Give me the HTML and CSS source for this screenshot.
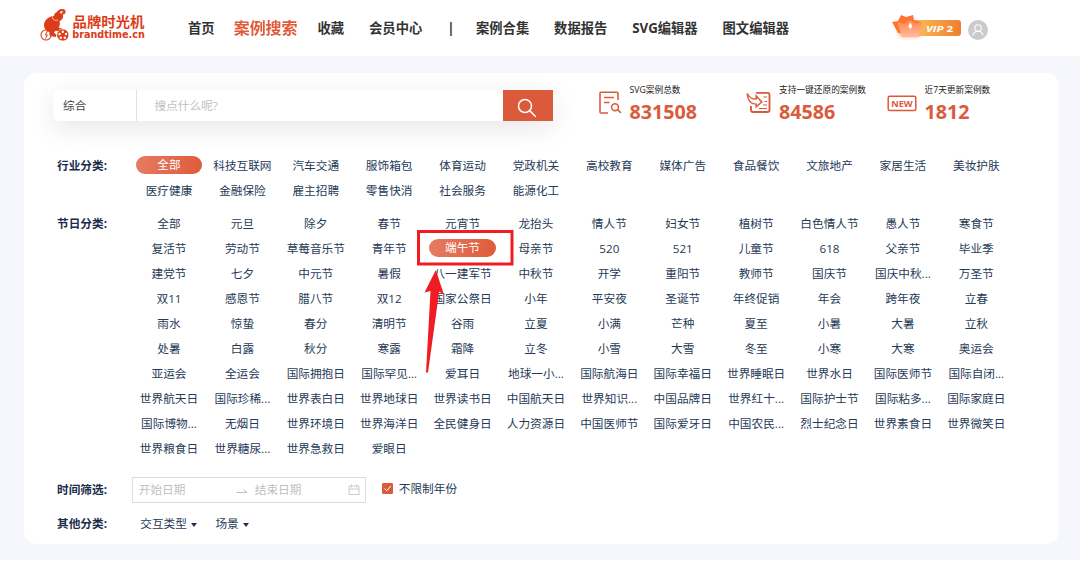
FILE: index.html
```html
<!DOCTYPE html>
<html lang="zh-CN">
<head>
  <meta charset="utf-8">
  <title>品牌时光机</title>
  <link rel="stylesheet" href="styles.css">
</head>
<body>
  <header class="header">
    <svg class="logo" width="108" height="36" viewBox="0 0 108 36">
      <g fill="#dc3c18">
        <path d="M14 8c0-2.500 2-4 5-4l4 3c.5 2.500-.5 4.500-2.500 5.500l-1 .5c.8 2.800.3 5-1 6.500l4.500 1.500-1.500 2.500-6-.8-1.500 1.800 2.500 2.500-.5 2-6-1c-1-2-1-3 0-4-3.500-.6-6-3-6-6.700 0-4.600 4-8.800 10-9.300z"/>
        <text class="logo-cn" x="32.500" y="19" textLength="72" lengthAdjust="spacingAndGlyphs">品牌时光机</text>
        <text class="logo-en" x="32.300" y="29.500" textLength="72.500" lengthAdjust="spacingAndGlyphs">brandtime.cn</text>
      </g>
      <path d="M17 6.500c1-3 3.500-4.800 6-4.300 2 .5 2 2.800-.3 3.300" fill="none" stroke="#dc3c18" stroke-width="2.400" stroke-linecap="round"/>
      <path d="M12.500 8.500c0 3 2 4.500 5.500 3.500" fill="none" stroke="#fff" stroke-width=".7"/>
      <g fill="none" stroke="#dc3c18">
        <circle cx="6" cy="27" r="5" stroke-width="1.100"/>
        <path d="M7.500 23l-2.200 4h2.200l-2 3.500" stroke-width="1"/>
      </g>
      <circle cx="22.800" cy="27" r="6" fill="#dc3c18" stroke="#fff" stroke-width=".6"/>
      <g fill="#fff">
        <circle cx="22.800" cy="23.800" r="1.200"/>
        <circle cx="26" cy="26" r="1.200"/>
        <circle cx="24.800" cy="29.700" r="1.200"/>
        <circle cx="20.800" cy="29.700" r="1.200"/>
        <circle cx="19.600" cy="26" r="1.200"/>
      </g>
    </svg>
    <nav class="nav">
      <a>首页</a>
      <a class="active">案例搜索</a>
      <a>收藏</a>
      <a>会员中心</a>
      <span class="nav-line">|</span>
      <a>案例合集</a>
      <a>数据报告</a>
      <a>SVG编辑器</a>
      <a>图文编辑器</a>
    </nav>
    <div class="user">
      <svg class="vip" width="74" height="30" viewBox="0 0 74 30">
        <defs>
          <linearGradient id="vipBar"><stop offset="0" stop-color="#f8bd58"/><stop offset="1" stop-color="#ef7f30"/></linearGradient>
          <linearGradient id="crown" x2="0" y2="1"><stop offset="0" stop-color="#ff8248"/><stop offset="1" stop-color="#ffbd9c"/></linearGradient>
          <filter id="glow" x="-30%" y="-30%" width="160%" height="160%"><feGaussianBlur stdDeviation="2"/></filter>
        </defs>
        <path d="M6 15h25l-3 10H9z" fill="#ffb59a" filter="url(#glow)"/>
        <path d="M24 8h43a3 3 0 0 1 3 3v10a3 3 0 0 1-3 3H24z" fill="url(#vipBar)"/>
        <path d="M1 10l6-1 3-6 5 2 7-2 1 5 7 2-3 12-20-1z" fill="#ff7430"/>
        <path d="M7 10.500l6 2 6-4 6 3.500 6-1.500-3 14H11z" fill="url(#crown)" stroke="#ffa377" stroke-width=".5"/>
        <path d="M19.300 10.500l2 3.500-2 3.500-2-3.500z" fill="#fff"/>
        <text class="vip-text" x="35" y="19.700" textLength="27" lengthAdjust="spacingAndGlyphs"><tspan font-style="italic">VIP</tspan> 2</text>
      </svg>
      <svg width="20" height="20" viewBox="0 0 20 20">
        <circle cx="10" cy="10" r="10" fill="#cbcbcb"/>
        <circle cx="10" cy="8" r="3.200" fill="none" stroke="#fff" stroke-width="1.100"/>
        <path d="M5 15.500c.3-2.800 2.300-4.300 5-4.300s4.700 1.500 5 4.300" fill="none" stroke="#fff" stroke-width="1.100"/>
      </svg>
    </div>
  </header>

  <main class="main">
    <section class="card">
      <div class="top">
        <div class="search">
          <span class="search-type">综合</span>
          <span class="search-input">搜点什么呢?</span>
          <span class="search-btn">
            <svg width="20" height="20" viewBox="0 0 20 20" fill="none" stroke="#fff" stroke-width="1.500">
              <circle cx="8" cy="8" r="6.500"/>
              <path d="M12.600 12.600l6.200 6.200"/>
            </svg>
          </span>
        </div>
        <div class="stat stat-total">
          <svg width="24" height="24" viewBox="0 0 24 24" fill="none" stroke="#dc5a3c" stroke-width="1.600">
            <path d="M10 23H3a1 1 0 0 1-1-1V3.200a1 1 0 0 1 1-1h16a1 1 0 0 1 1 1V10"/>
            <path d="M6 7.500h10M6 12.500h5.500"/>
            <circle cx="17" cy="17.200" r="3.400"/>
            <path d="M19.500 19.700l3.500 3.300"/>
          </svg>
          <div><p>SVG案例总数</p><b>831508</b></div>
        </div>
        <div class="stat stat-restore">
          <svg width="26" height="26" viewBox="0 0 26 26" fill="none" stroke="#dc5a3c" stroke-width="1.500">
            <path d="M10 4.900h11.500a2 2 0 0 1 2 2V22a2 2 0 0 1-2 2H7a2 2 0 0 1-2-2v-4" stroke-width="1.900"/>
            <path d="M1.200 5.500c2.200 4 5.200 5.800 9 5.600V8l5.600 6-5.600 4.800v-2.600c-5.200 0-8.500-4-9-10.700z"/>
            <path d="M17.500 9h3.500M18.500 13.500h2.500M17 17h4M13 20.500h8" stroke-width="1.200"/>
          </svg>
          <div><p>支持一键还原的案例数</p><b>84586</b></div>
        </div>
        <div class="stat stat-new">
          <svg width="30" height="24" viewBox="0 0 30 24">
            <rect x="1.200" y="6.200" width="27.600" height="14.400" rx="1.500" fill="none" stroke="#dc5a3c" stroke-width="1.500"/>
            <text class="new-text" x="4.200" y="16.900" textLength="21.500" lengthAdjust="spacingAndGlyphs">NEW</text>
          </svg>
          <div><p>近7天更新案例数</p><b>1812</b></div>
        </div>
      </div>

      <div class="filter industry">
        <div class="label">行业分类:</div>
        <div class="options">
          <a class="on">全部</a><a>科技互联网</a><a>汽车交通</a><a>服饰箱包</a><a>体育运动</a><a>党政机关</a><a>高校教育</a><a>媒体广告</a><a>食品餐饮</a><a>文旅地产</a><a>家居生活</a><a>美妆护肤</a>
          <a>医疗健康</a><a>金融保险</a><a>雇主招聘</a><a>零售快消</a><a>社会服务</a><a>能源化工</a>
        </div>
      </div>

      <div class="filter festival">
        <div class="label">节日分类:</div>
        <div class="options">
          <a>全部</a><a>元旦</a><a>除夕</a><a>春节</a><a>元宵节</a><a>龙抬头</a><a>情人节</a><a>妇女节</a><a>植树节</a><a>白色情人节</a><a>愚人节</a><a>寒食节</a>
          <a>复活节</a><a>劳动节</a><a>草莓音乐节</a><a>青年节</a><a class="on">端午节</a><a>母亲节</a><a>520</a><a>521</a><a>儿童节</a><a>618</a><a>父亲节</a><a>毕业季</a>
          <a>建党节</a><a>七夕</a><a>中元节</a><a>暑假</a><a>八一建军节</a><a>中秋节</a><a>开学</a><a>重阳节</a><a>教师节</a><a>国庆节</a><a>国庆中秋...</a><a>万圣节</a>
          <a>双11</a><a>感恩节</a><a>腊八节</a><a>双12</a><a>国家公祭日</a><a>小年</a><a>平安夜</a><a>圣诞节</a><a>年终促销</a><a>年会</a><a>跨年夜</a><a>立春</a>
          <a>雨水</a><a>惊蛰</a><a>春分</a><a>清明节</a><a>谷雨</a><a>立夏</a><a>小满</a><a>芒种</a><a>夏至</a><a>小暑</a><a>大暑</a><a>立秋</a>
          <a>处暑</a><a>白露</a><a>秋分</a><a>寒露</a><a>霜降</a><a>立冬</a><a>小雪</a><a>大雪</a><a>冬至</a><a>小寒</a><a>大寒</a><a>奥运会</a>
          <a>亚运会</a><a>全运会</a><a>国际拥抱日</a><a>国际罕见...</a><a>爱耳日</a><a>地球一小...</a><a>国际航海日</a><a>国际幸福日</a><a>世界睡眠日</a><a>世界水日</a><a>国际医师节</a><a>国际自闭...</a>
          <a>世界航天日</a><a>国际珍稀...</a><a>世界表白日</a><a>世界地球日</a><a>世界读书日</a><a>中国航天日</a><a>世界知识...</a><a>中国品牌日</a><a>世界红十...</a><a>国际护士节</a><a>国际粘多...</a><a>国际家庭日</a>
          <a>国际博物...</a><a>无烟日</a><a>世界环境日</a><a>世界海洋日</a><a>全民健身日</a><a>人力资源日</a><a>中国医师节</a><a>国际爱牙日</a><a>中国农民...</a><a>烈士纪念日</a><a>世界素食日</a><a>世界微笑日</a>
          <a>世界粮食日</a><a>世界糖尿...</a><a>世界急救日</a><a>爱眼日</a>
        </div>
      </div>

      <div class="filter time">
        <div class="label">时间筛选:</div>
        <div class="date-range">
          <span class="date">开始日期</span>
          <svg width="12" height="12" viewBox="0 0 12 12" fill="none" stroke="#bfbfbf"><path d="M.5 8.500h10.500L7.500 5.500"/></svg>
          <span class="date date-end">结束日期</span>
          <svg width="12" height="12" viewBox="0 0 12 12" fill="none" stroke="#c4c4c4" stroke-width=".9"><path d="M1 2h10v8.500H1zM1 5h10M3.500.5v3M8.500.5v3"/></svg>
        </div>
        <label class="check">
          <svg width="11" height="11" viewBox="0 0 11 11"><rect width="11" height="11" rx="1.300" fill="#dc5a3c"/><path d="M2.500 5.500l2.300 2.300 4-4.800" fill="none" stroke="#fff" stroke-width="1"/></svg>
          不限制年份
        </label>
      </div>

      <div class="filter other">
        <div class="label">其他分类:</div>
        <a class="drop">交互类型<i class="caret"></i></a>
        <a class="drop">场景<i class="caret"></i></a>
      </div>
    </section>
  </main>

  <!-- highlight for the selected festival -->
  <svg class="mark" width="100" height="146" viewBox="0 0 100 146">
    <rect x="2.500" y="3.500" width="93.500" height="32.500" fill="none" stroke="#f01c24" stroke-width="3"/>
    <path d="M19.800 42L28 66.800l-4.800-3.300L12 144.500h-2L14.500 63l-6 1.500z" fill="#f01c24"/>
  </svg>
</body>
</html>
```
FILE: styles.css
```css
body {
  margin: 0;
  background: #fff;
  color: #263a56;
  font-family: "Open Sans", "Noto Sans CJK SC", sans-serif;
  font-size: 11.67px;
}
p { margin: 0; }

/* header */
.header {
  display: flex;
  align-items: center;
  height: 56px;
  padding-left: 40px;
  box-sizing: border-box;
}
.logo {
  margin-bottom: 4px;
  overflow: visible;
}
.logo-cn {
  font: bold 13.5px "Noto Sans CJK SC", sans-serif;
}
.logo-en {
  font: bold 10px "DejaVu Sans", sans-serif;
}
.nav {
  display: flex;
  gap: 24.9px;
  margin-left: 40px;
  width: 702.5px;
  color: #333;
  font-size: 13.3px;
  font-weight: bold;
  line-height: 20px;
  white-space: nowrap;
}
.nav .active {
  color: #e2593a;
  transform: scale(1.2);
}
.nav-line {
  width: 4px;
  text-align: center;
}
.user {
  display: flex;
  align-items: center;
  gap: 3px;
  padding-top: 3px;
}
.vip {
  margin-bottom: 5px;
}
.vip-text {
  fill: #fff;
  font: bold 9.5px "Open Sans", sans-serif;
}

/* card */
.main {
  height: 504px;
  padding: 17px 21px 0 24px;
  box-sizing: border-box;
  background: #f6f7fd;
}
.card {
  height: 471px;
  padding: 16.5px 0 0 33px;
  box-sizing: border-box;
  border-radius: 13px;
  background: #fff;
  overflow: hidden;
}
.top {
  display: flex;
  height: 31.5px;
  margin-left: -4px;
}
.search {
  display: flex;
  width: 499.5px;
  border-radius: 6px 0 0 6px;
  background: #fff;
  box-shadow: 0 7px 27px rgba(0, 0, 0, 0.1);
  line-height: 32px;
}
.search-type {
  width: 84px;
  padding-left: 10px;
  box-sizing: border-box;
  border-right: 1px solid #e2e2e2;
  color: #444;
}
.search-input {
  flex: 1;
  padding-left: 17.5px;
  color: #bfbfbf;
}
.search-btn {
  display: flex;
  align-items: center;
  justify-content: center;
  width: 50px;
  padding-top: 5px;
  padding-right: 1px;
  box-sizing: border-box;
  background: #dc5a3c;
}

.stat {
  display: flex;
  gap: 7.5px;
  color: #222;
  font-size: 8.7px;
  white-space: nowrap;
}
.stat svg {
  margin-top: 0;
}
.stat-restore svg {
  margin-top: -1.5px;
}
.new-text {
  fill: #dc5a3c;
  font: bold 9px "Open Sans", sans-serif;
}
.stat p {
  height: 12px;
  margin-top: -6px;
  line-height: 12px;
}
.stat b {
  display: block;
  color: #dc5a3c;
  font-size: 19.7px;
  line-height: 31px;
}
.stat-total { width: 147.5px; margin-left: 45.5px; }
.stat-restore { width: 141.5px; }

/* filters */
.filter {
  display: flex;
  line-height: 25px;
}
.label {
  width: 75.3px;
  color: #1b2c4a;
  font-weight: bold;
}
.options {
  display: grid;
  grid-template-columns: repeat(12, 73.4px);
  grid-auto-rows: 25px;
  justify-items: center;
  align-items: center;
  white-space: nowrap;
}
.options .on {
  width: 66.5px;
  height: 18.5px;
  border-radius: 10px;
  background: linear-gradient(100deg, #e67c62, #de5b3b);
  color: #fff;
  line-height: 18.5px;
  text-align: center;
}
.industry { margin-top: 31.5px; }
.festival { margin-top: 8px; }
.time { margin-top: 16.5px; }
.other { margin-top: 8.5px; }

.date-range {
  display: flex;
  align-items: center;
  width: 234px;
  height: 25.5px;
  padding: 0 5.5px;
  box-sizing: border-box;
  border: 1px solid #dcdcdc;
  color: #bfbfbf;
}
.date {
  width: 97px;
}
.date-end {
  padding-left: 7px;
  width: 93px;
}
.check {
  display: flex;
  align-items: center;
  gap: 5.5px;
  height: 23px;
  margin-left: 16px;
}
.drop {
  display: flex;
  align-items: center;
  gap: 4px;
  margin-left: 8px;
  margin-right: 10.5px;
}
.caret {
  margin-top: 2px;
  border: 3.5px solid transparent;
  border-top: 4px solid #1f3350;
  border-bottom: 0;
}

.mark {
  position: absolute;
  left: 415.5px;
  top: 227.5px;
}
```
